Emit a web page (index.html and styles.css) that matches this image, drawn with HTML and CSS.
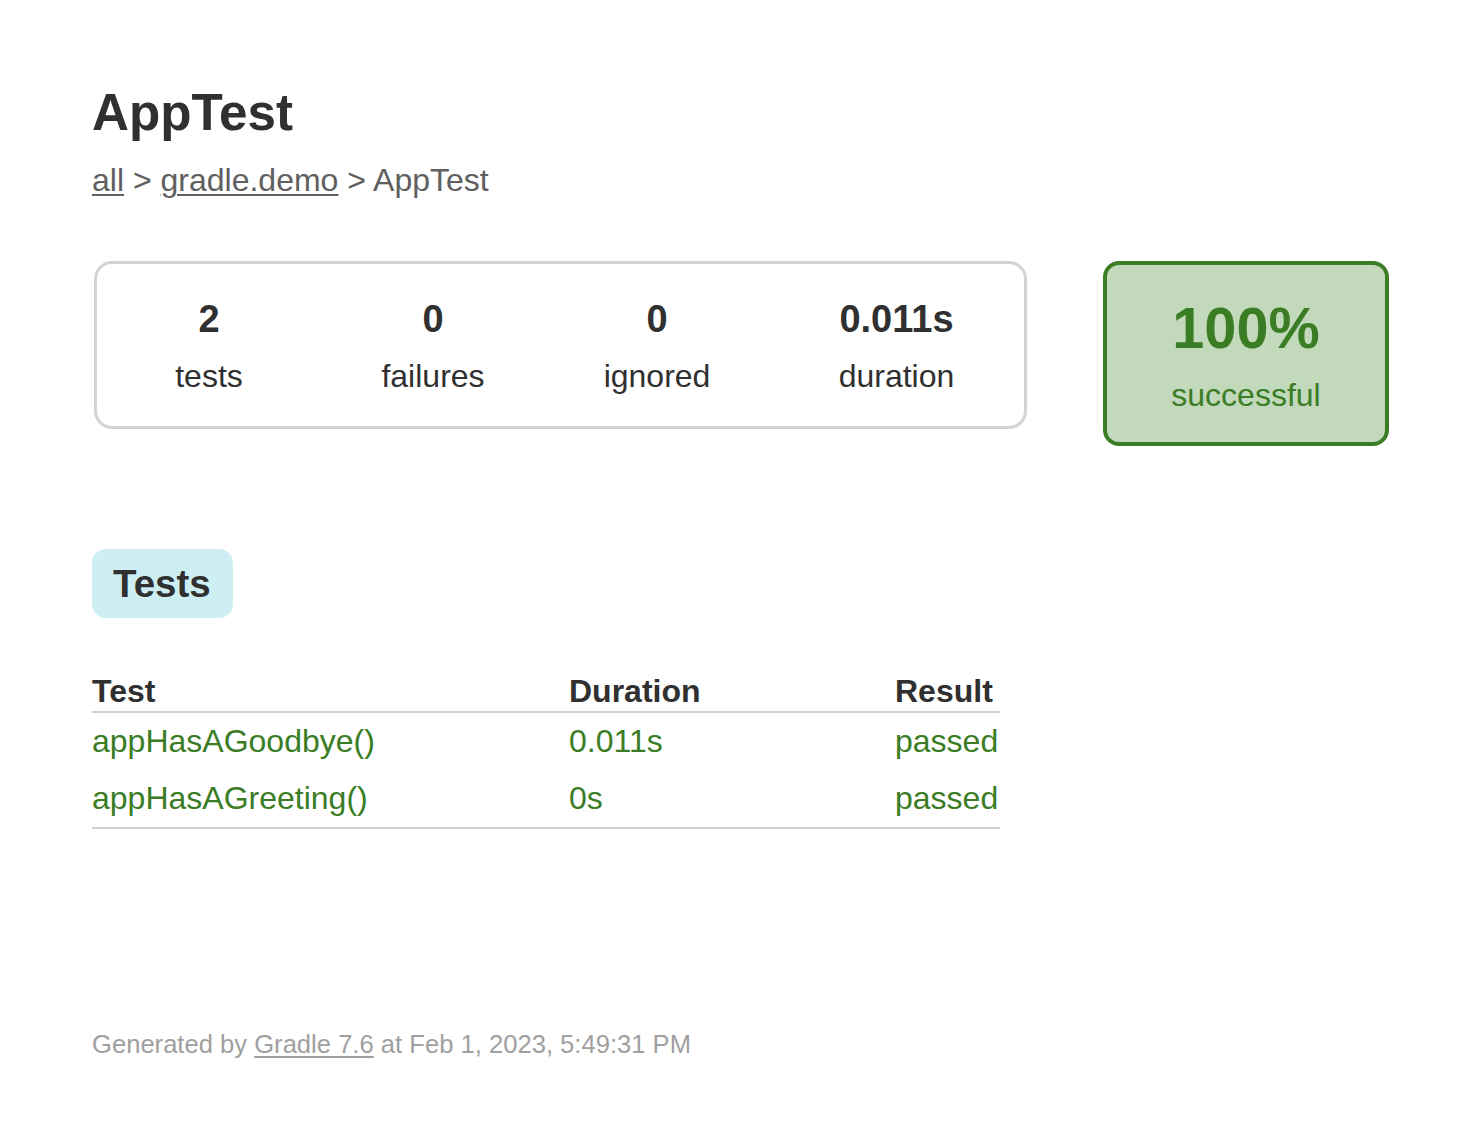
FILE: index.html
```html
<!DOCTYPE html>
<html>
<head>
<meta charset="utf-8">
<title>Test results - AppTest</title>
<link rel="stylesheet" href="styles.css">
</head>
<body>
<div class="content">
  <h1 class="title">AppTest</h1>
  <div class="breadcrumbs"><a href="#">all</a> &gt; <a href="#">gradle.demo</a> &gt; AppTest</div>
  <div class="summary">
    <div class="summary-group">
      <div class="info-box"><div class="counter">2</div><p>tests</p></div>
      <div class="info-box"><div class="counter">0</div><p>failures</p></div>
      <div class="info-box"><div class="counter">0</div><p>ignored</p></div>
      <div class="info-box info-duration"><div class="counter">0.011s</div><p>duration</p></div>
    </div>
    <div class="success-rate">
      <div class="percent">100%</div>
      <p>successful</p>
    </div>
  </div>
  <ul class="tab-links">
    <li class="selected"><h2>Tests</h2></li>
  </ul>
  <table class="tests">
    <thead>
      <tr><th class="col-test">Test</th><th class="col-dur">Duration</th><th class="col-res">Result</th></tr>
    </thead>
    <tbody>
      <tr><td>appHasAGoodbye()</td><td>0.011s</td><td>passed</td></tr>
      <tr><td>appHasAGreeting()</td><td>0s</td><td>passed</td></tr>
    </tbody>
  </table>
  <div class="footer">Generated by <a href="#">Gradle 7.6</a> at Feb 1, 2023, 5:49:31 PM</div>
</div>
</body>
</html>
```
FILE: styles.css
```css
html, body {
  margin: 0;
  padding: 0;
  background: #ffffff;
}
body {
  font-family: "Liberation Sans", Arial, Helvetica, sans-serif;
  color: #303030;
}
.content {
  padding: 84px 0 40px 92px;
}
.title {
  margin: 0;
  font-size: 51.2px;
  line-height: 58px;
  font-weight: bold;
  color: #303030;
  white-space: nowrap;
}
.breadcrumbs {
  margin-top: 20px;
  font-size: 32px;
  line-height: 37px;
  color: #606060;
}
.breadcrumbs a {
  color: #606060;
  text-decoration: underline;
  text-decoration-thickness: 2px;
  text-underline-offset: 3px;
}
.summary {
  margin-top: 62px;
  display: flex;
  align-items: flex-start;
}
.summary-group {
  flex-shrink: 0;
  margin-left: 2px;
  border: 3px solid #d3d3d3;
  border-radius: 18px;
  display: flex;
}
.info-box {
  width: 224px;
  padding: 33px 0 31px 0;
  text-align: center;
}
.info-duration {
  width: 255px;
}
.info-box p, .success-rate p {
  margin: 0;
  font-size: 32px;
  line-height: 37px;
}
.counter {
  font-size: 38px;
  line-height: 44px;
  font-weight: bold;
  margin-bottom: 17px;
}
.success-rate {
  flex-shrink: 0;
  margin-left: 76px;
  width: 278px;
  padding: 30px 0 28px 0;
  border: 4px solid #3a7d24;
  border-radius: 16px;
  background: #c2d9bc;
  color: #3a7d24;
  text-align: center;
}
.percent {
  font-size: 57.6px;
  line-height: 66px;
  font-weight: bold;
  margin-bottom: 16px;
}
.tab-links {
  list-style: none;
  margin: 103px 0 0 0;
  padding: 0;
  display: flex;
}
.tab-links li {
  padding: 13px 22px 12px 21px;
  border-radius: 14px;
  background: #cdeff4;
}
.tab-links h2 {
  margin: 0;
  font-size: 38.5px;
  line-height: 44px;
  font-weight: bold;
  color: #303030;
}
.tests {
  margin-top: 54px;
  border-collapse: collapse;
  border-bottom: 2px solid #d0d0d0;
  font-size: 32px;
  line-height: 37px;
}
.tests th {
  text-align: left;
  font-weight: bold;
  padding: 1px 0 1px 0;
  border-bottom: 2px solid #d0d0d0;
  white-space: nowrap;
  color: #303030;
}
.tests td {
  padding: 10px 0 10px 0;
  white-space: nowrap;
  color: #3a7d24;
}
.col-test {
  width: 477px;
}
.col-dur {
  width: 326px;
}
.col-res {
  width: 105px;
}
.footer {
  margin-top: 200px;
  font-size: 25.6px;
  line-height: 30px;
  color: #a0a0a0;
  white-space: nowrap;
}
.footer a {
  color: #a0a0a0;
  text-decoration: underline;
  text-decoration-thickness: 2px;
  text-underline-offset: 3px;
}
```
